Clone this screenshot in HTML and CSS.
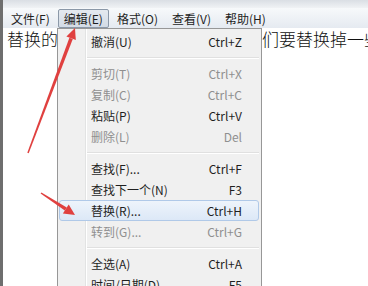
FILE: index.html
```html
<!DOCTYPE html>
<html lang="zh-CN">
<head>
    <meta charset="UTF-8">
    <title>记事本 - 编辑菜单</title>
    <link rel="stylesheet" href="styles.css">
</head>
<body>
    <div class="window">
        <!--窗口顶部边框-->
        <div class="frameTop"></div>
        <!--菜单栏-->
        <div class="menuBar">
            <span class="menuItem">文件(F)</span>
            <span class="menuItem open">编辑(E)</span>
            <span class="menuItem">格式(O)</span>
            <span class="menuItem">查看(V)</span>
            <span class="menuItem">帮助(H)</span>
        </div>
        <!--文本区-->
        <div class="editor">替换的文字有很多，如果这时候我们要替换掉一些</div>

        <!--下拉菜单-->
        <ul class="dropMenu">
            <li class="item"><span>撤消(U)</span><span>Ctrl+Z</span></li>
            <li class="sep"></li>
            <li class="item disabled"><span>剪切(T)</span><span>Ctrl+X</span></li>
            <li class="item disabled"><span>复制(C)</span><span>Ctrl+C</span></li>
            <li class="item"><span>粘贴(P)</span><span>Ctrl+V</span></li>
            <li class="item disabled"><span>删除(L)</span><span>Del</span></li>
            <li class="sep"></li>
            <li class="item"><span>查找(F)...</span><span>Ctrl+F</span></li>
            <li class="item"><span>查找下一个(N)</span><span>F3</span></li>
            <li class="item hover"><span>替换(R)...</span><span>Ctrl+H</span></li>
            <li class="item disabled"><span>转到(G)...</span><span>Ctrl+G</span></li>
            <li class="sep"></li>
            <li class="item"><span>全选(A)</span><span>Ctrl+A</span></li>
            <li class="item"><span>时间/日期(D)</span><span>F5</span></li>
        </ul>

        <!--标注箭头-->
        <svg class="arrows" width="368" height="286" viewBox="0 0 368 286">
            <polygon points="27.3,152.7 28.7,153.3 72.8,38.9 69.4,37.7" fill="#e0403f"/>
            <polygon points="75,28 75.8,40 66.4,36.5" fill="#e0403f"/>
            <polygon points="40.6,193.5 41.4,192.5 66.8,207.5 64.8,210.5" fill="#e0403f"/>
            <polygon points="75,215 62.9,213.5 68.7,204.6" fill="#e0403f"/>
        </svg>
    </div>
</body>
</html>
```

FILE: styles.css
```css
*{
    padding: 0;
    margin: 0;
    list-style: none;
}
body{
    width: 368px;
    height: 286px;
    overflow: hidden;
    background-color: #fff;
    font-family: "Noto Sans CJK SC", "Noto Sans", sans-serif;
}
.window{
    position: relative;
    width: 368px;
    height: 286px;
    border-left: 3px solid #6e6e6e;
    box-sizing: border-box;
    overflow: hidden;
}
.frameTop{
    height: 8px;
    background: linear-gradient(#dadee4, #f0f2f5);
}
.menuBar{
    display: flex;
    height: 20px;
    padding-left: 1px;
    align-items: center;
    background: linear-gradient(#f7f9fb, #e5eaf1);
    font-size: 12px;
    color: #1e1e1e;
}
.menuBar .menuItem{
    height: 17px;
    line-height: 17px;
    padding: 0 5px;
    margin: 0 1px;
    border: 1px solid transparent;
    border-radius: 2px;
    white-space: nowrap;
}
.menuBar .open{
    border-color: #8b98a8;
    background: linear-gradient(#e4e9ef, #d3dbe5);
}
.editor{
    padding: 0 0 0 4px;
    font-size: 17px;
    line-height: 21px;
    font-weight: 300;
    color: #111;
    white-space: nowrap;
}
.dropMenu{
    position: absolute;
    left: 54px;
    top: 28px;
    width: 205px;
    height: 270px;
    padding: 2px 2px 2px 1px;
    box-sizing: border-box;
    border: 1px solid #979797;
    background-color: #f0f0f0;
    background-image: linear-gradient(to right, transparent 27px, #e2e3e3 27px, #e2e3e3 28px, #fff 28px, #fff 29px, transparent 29px);
    font-size: 12px;
    color: #1f1f1f;
}
.dropMenu .item{
    display: flex;
    justify-content: space-between;
    align-items: center;
    height: 21px;
    padding: 0 16px 0 31px;
    border: 1px solid transparent;
    border-radius: 3px;
    box-sizing: border-box;
    white-space: nowrap;
}
.dropMenu .disabled{
    color: #8f8f8f;
}
.dropMenu .hover{
    border-color: #b0c9e8;
    background: linear-gradient(#eef4fb, #dce8f7);
}
.dropMenu .sep{
    height: 11px;
    margin-left: 28px;
    background: linear-gradient(transparent 5px, #e0e0e0 5px, #e0e0e0 6px, #fff 6px, #fff 7px, transparent 7px);
}
.arrows{
    position: absolute;
    top: 0;
    left: -3px;
    pointer-events: none;
}
```
